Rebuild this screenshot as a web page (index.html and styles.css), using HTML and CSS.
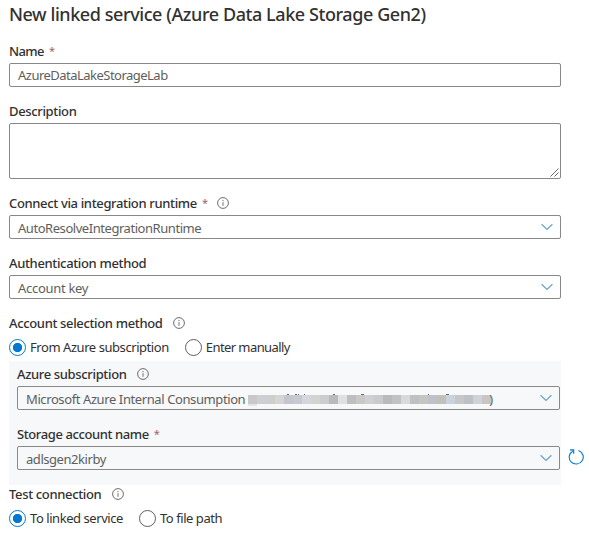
FILE: index.html
```
<!DOCTYPE html>
<html lang="en">
<head>
<meta charset="utf-8">
<title>New linked service</title>
<link rel="stylesheet" href="styles.css">
</head>
<body>
<svg class="defs" width="0" height="0" aria-hidden="true">
  <symbol id="info" viewBox="0 0 12 12"><circle cx="6" cy="6" r="5.4"/><path d="M6 5.2v3.6M6 3v1.2"/></symbol>
  <symbol id="chevron" viewBox="0 0 12 8"><path d="M.6 1.2 6 6.5l5.4-5.3"/></symbol>
</svg>
<main class="form">
  <h1 class="title">New linked service (Azure Data Lake Storage Gen2)</h1>

  <section class="field">
    <div class="label"><span class="t-name">Name</span><span class="req">*</span></div>
    <div class="box plain"><span class="v-name">AzureDataLakeStorageLab</span></div>
  </section>

  <section class="field">
    <div class="label"><span class="t-desc">Description</span></div>
    <div class="box area"><svg class="grip" viewBox="0 0 9 9"><path d="M.5 8.5l8-8M4.5 8.5l4-4"/></svg></div>
  </section>

  <section class="field">
    <div class="label"><span class="t-connect">Connect via integration runtime</span><span class="req">*</span><svg class="info"><use href="#info"/></svg></div>
    <div class="box"><span class="v-runtime">AutoResolveIntegrationRuntime</span><svg class="chevron"><use href="#chevron"/></svg></div>
  </section>

  <section class="field">
    <div class="label"><span class="t-auth">Authentication method</span></div>
    <div class="box"><span class="v-key">Account key</span><svg class="chevron"><use href="#chevron"/></svg></div>
  </section>

  <section class="choice">
    <div class="label"><span class="t-select">Account selection method</span><svg class="info"><use href="#info"/></svg></div>
    <div class="radios">
      <div class="radio"><i class="dot on"></i><span class="r-from">From Azure subscription</span></div>
      <div class="radio"><i class="dot"></i><span class="r-enter">Enter manually</span></div>
    </div>
  </section>

  <div class="panel-row">
    <div class="panel">
      <section class="field">
        <div class="label"><span class="t-sub">Azure subscription</span><svg class="info"><use href="#info"/></svg></div>
        <div class="box"><span class="v-sub">Microsoft Azure Internal Consumption</span>
          <svg class="mask" viewBox="0 0 243 12" shape-rendering="crispEdges">
            <g fill="#686870"><path d="M39 1h2v1h-2zM47 1h2v1h-2zM50 1h1v1h-1zM56 1h1v1h-1zM85 1h2v1h-2zM113 1h3v1h-3zM180 1h1v1h-1zM198 1h3v1h-3z"/></g>
            <path fill="#e5e5e6" d="M0 11h9v2H0z"/>
            <path fill="#c9c8c8" d="M0 2h9v9H0z"/><path fill="#ceced7" d="M9 2h9v9H9z"/><path fill="#d0cecd" d="M18 2h9v9h-9z"/><path fill="#d6d5d3" d="M27 2h9v9h-9z"/><path fill="#c3c5cf" d="M36 2h9v9h-9z"/><path fill="#c7c9d2" d="M45 2h9v9h-9z"/><path fill="#d6d5dc" d="M54 2h9v9h-9z"/><path fill="#d3d3d2" d="M63 2h9v9h-9z"/><path fill="#cccdcd" d="M72 2h9v9h-9z"/><path fill="#bababb" d="M81 2h9v9h-9z"/><path fill="#dee1e2" d="M90 2h9v9h-9z"/><path fill="#bebebf" d="M99 2h9v9h-9z"/><path fill="#c9c8c5" d="M108 2h9v9h-9z"/><path fill="#cdd1d5" d="M117 2h9v9h-9z"/><path fill="#c8cacb" d="M126 2h9v9h-9z"/><path fill="#b9baba" d="M135 2h9v9h-9z"/><path fill="#c1c3c3" d="M144 2h9v9h-9z"/><path fill="#d9d8dc" d="M153 2h9v9h-9z"/><path fill="#bec1c2" d="M162 2h9v9h-9z"/><path fill="#c6c5c4" d="M171 2h9v9h-9z"/><path fill="#c0c0ca" d="M180 2h9v9h-9z"/><path fill="#c3bfba" d="M189 2h9v9h-9z"/><path fill="#cad3dc" d="M198 2h9v9h-9z"/><path fill="#c6c7c8" d="M207 2h9v9h-9z"/><path fill="#bdc1c3" d="M216 2h9v9h-9z"/><path fill="#d1d2d8" d="M225 2h9v9h-9z"/><path fill="#c7c6c4" d="M234 2h9v9h-9z"/>
          </svg><span class="paren">)</span><svg class="chevron"><use href="#chevron"/></svg></div>
      </section>
      <section class="field">
        <div class="label"><span class="t-storage">Storage account name</span><span class="req">*</span></div>
        <div class="box"><span class="v-adls">adlsgen2kirby</span><svg class="chevron"><use href="#chevron"/></svg></div>
      </section>
    </div>
    <svg class="refresh" viewBox="0 0 16 16"><path d="M10.4 1.4A7 7 0 1 1 4.9 1.9M2 .9h3.7v3.8"/></svg>
  </div>

  <section class="choice test">
    <div class="label"><span class="t-test">Test connection</span><svg class="info"><use href="#info"/></svg></div>
    <div class="radios">
      <div class="radio"><i class="dot on"></i><span class="r-linked">To linked service</span></div>
      <div class="radio"><i class="dot"></i><span class="r-path">To file path</span></div>
    </div>
  </section>
</main>
</body>
</html>
```
FILE: styles.css
```
* { box-sizing: border-box; }
body { margin: 0; background: #fff; color: #323130; font: 13px/24px "Noto Sans", "Open Sans", sans-serif; overflow: hidden; }
.defs { position: absolute; }
svg { fill: none; flex: none; }
.form { padding: 0 0 0 9px; white-space: nowrap; }
.title { margin: 0 0 11px; height: 28px; font-size: 18px; line-height: 28px; font-weight: 500; letter-spacing: -.42px; }
.field { width: 552px; margin-bottom: 12px; }
.label { display: flex; align-items: center; height: 24px; font-weight: 500; letter-spacing: -.35px; }
.t-name { letter-spacing: -.6px; }
.t-storage { letter-spacing: -.4px; }
.req { color: #a85f62; font-size: 11px; font-weight: 400; margin: 0 0 1px 5px; width: 5px; }
.info { width: 12px; height: 12px; margin: 0 0 1px 10.5px; stroke: #605e5c; stroke-width: .9; }
.box { display: flex; align-items: center; height: 24px; padding: 2px 7px 0 8px; border: 1px solid #8a8886; border-radius: 2px; color: #605e5c; letter-spacing: -.45px; }
.plain { padding-top: 0; }
.v-name { letter-spacing: -.52px; }
.v-key { letter-spacing: -.3px; }
.v-sub { letter-spacing: -.4px; }
.area { height: 56px; align-items: flex-end; padding: 0 1px 1px; }
.grip { width: 9px; height: 9px; margin-left: auto; stroke: #555; stroke-width: .9; }
.chevron { width: 12px; height: 8px; margin: 0 0 3px auto; stroke: #6ba3c4; stroke-width: 1.2; }
.radios { display: flex; gap: 16px; height: 24px; align-items: center; }
.radio { display: flex; align-items: center; gap: 4px; letter-spacing: -.44px; }
.r-enter { letter-spacing: -.58px; }
.dot { width: 17px; height: 17px; flex: none; border: 1px solid #605e5c; border-radius: 50%; }
.dot.on { border-color: #0078d4; background: radial-gradient(circle, #0078d4 4.3px, transparent 5px); }
.panel-row { display: flex; margin-top: 2px; }
.panel { width: 552px; height: 124px; padding: 1px 1px 0 8px; background: #f6f8fa; }
.panel .field { width: 543px; }
.mask { width: 243px; height: 12px; margin-left: 3px; overflow: visible; }
.paren { margin-left: -2px; }
.refresh { width: 16px; height: 16px; margin: 88px 0 0 7px; stroke: #0078d4; stroke-width: 1.1; }
.test .label { height: 18px; }
.test .radios { height: 30px; }
```
